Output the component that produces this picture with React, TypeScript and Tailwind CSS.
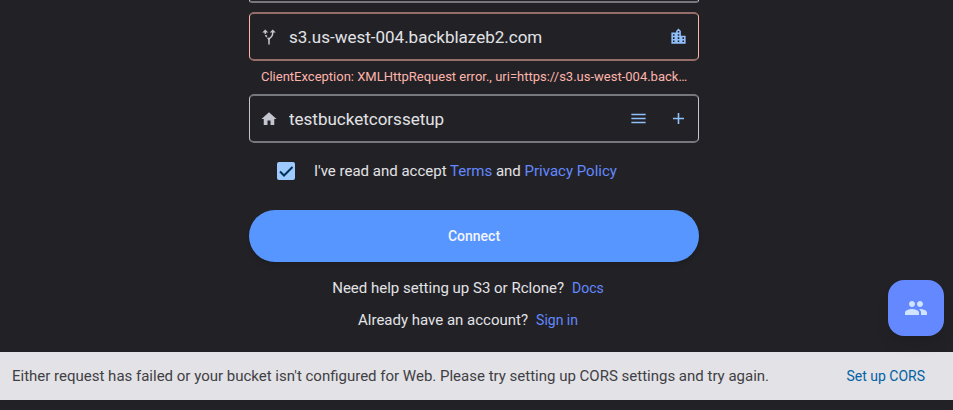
import type { ReactNode } from 'react';
import { useState } from 'react';

type IconProps = { d: string; size: string };

function Icon({ d, size }: IconProps) {
  return (
    <svg viewBox="0 0 24 24" fill="currentColor" className={size} aria-hidden="true">
      <path d={d} />
    </svg>
  );
}

const icons = {
  fork: 'M9.78 11.16l-1.42 1.42c-.68-.69-1.34-1.58-1.79-2.94l1.94-.49c.32.89.77 1.5 1.27 2.01zM11 6L7 2 3 6h3.02c.02.81.08 1.54.19 2.17l1.94-.49C8.08 7.2 8.03 6.63 8.02 6H11zm10 0l-4-4-4 4h2.99c-.1 3.68-1.28 4.75-2.54 5.88-.5.44-1.01.92-1.45 1.55-.34-.49-.73-.88-1.13-1.24L9.46 13.6c.93.85 1.54 1.54 1.54 3.4v5h2v-5c0-2.02.71-2.66 1.79-3.63 1.38-1.24 3.08-2.78 3.2-7.37H21z',
  home: 'M10 20v-6h4v6h5v-8h3L12 3 2 12h3v8z',
  city: 'M15 11V5l-3-3-3 3v2H3v14h18V11h-6zm-8 8H5v-2h2v2zm0-4H5v-2h2v2zm0-4H5V9h2v2zm6 8h-2v-2h2v2zm0-4h-2v-2h2v2zm0-4h-2V9h2v2zm0-4h-2V5h2v2zm6 12h-2v-2h2v2zm0-4h-2v-2h2v2z',
  list: 'M3 18h18v-2H3v2zm0-5h18v-2H3v2zm0-7v2h18V6H3z',
  plus: 'M19 13h-6v6h-2v-6H5v-2h6V5h2v6h6v2z',
  people:
    'M16 11c1.66 0 2.99-1.34 2.99-3S17.66 5 16 5s-3 1.34-3 3 1.34 3 3 3zm-8 0c1.66 0 2.99-1.34 2.99-3S9.66 5 8 5 5 6.34 5 8s1.34 3 3 3zm0 2c-2.33 0-7 1.17-7 3.5V19h14v-2.5c0-2.33-4.67-3.5-7-3.5zm8 0c-.29 0-.62.02-.97.05 1.16.84 1.97 1.97 1.97 3.45V19h6v-2.5c0-2.33-4.67-3.5-7-3.5z',
};

function Field({
  label,
  icon,
  value,
  error,
  children,
}: {
  label: string;
  icon: string;
  value: string;
  error?: boolean;
  children: ReactNode;
}) {
  return (
    <div
      className={`flex h-[49px] items-center rounded-[5px] border-x border-y-2 pl-[10px] ${
        error ? 'border-x-[#ffb4ab] border-y-[#956d6a]' : 'border-x-[#c3c6cf] border-y-[#77787d]'
      }`}
    >
      <span className="text-[#c3c6cf]">
        <Icon d={icon} size="size-[18px]" />
      </span>
      <input
        aria-label={label}
        aria-invalid={error}
        defaultValue={value}
        className="ml-[11px] min-w-0 flex-1 bg-transparent text-[17px] leading-6 text-[#e3e2e6] outline-none"
      />
      {children}
    </div>
  );
}

function FieldButton({ label, icon }: { label: string; icon: string }) {
  return (
    <button type="button" aria-label={label} className="flex size-10 items-center justify-center text-[#90c0fb]">
      <Icon d={icon} size="size-[19px]" />
    </button>
  );
}

export default function App() {
  const [accepted, setAccepted] = useState(true);
  return (
    <div className="min-h-screen bg-[#222226] font-[Roboto,sans-serif] text-[15px] leading-5 text-[#e3e2e6]">
      <main className="flex justify-center pr-[5px]">
        <form className="flex w-full max-w-[450px] flex-col" onSubmit={(e) => e.preventDefault()}>
          <div className="h-[3px] rounded-b-[5px] border-x border-b-2 border-x-[#c3c6cf] border-b-[#77787d]" />
          <div className="mt-[9px]">
            <Field label="Endpoint" icon={icons.fork} value="s3.us-west-004.backblazeb2.com" error>
              <FieldButton label="Choose provider" icon={icons.city} />
            </Field>
          </div>
          <p className="pt-2 pr-2 pb-[9px] pl-3 text-[13px] leading-4 text-[#ffb4ab]">
            ClientException: XMLHttpRequest error., uri=https://s3.us-west-004.back…
          </p>
          <Field label="Bucket" icon={icons.home} value="testbucketcorssetup">
            <FieldButton label="List buckets" icon={icons.list} />
            <FieldButton label="Create bucket" icon={icons.plus} />
          </Field>
          <div className="mt-[18px] flex items-center pl-7">
            <span className="relative flex size-[18px]">
              <input
                id="accept"
                type="checkbox"
                checked={accepted}
                onChange={(e) => setAccepted(e.target.checked)}
                className="size-[18px] appearance-none rounded-xs border-2 border-[#9ecaff] checked:bg-[#9ecaff]"
              />
              {accepted && (
                <svg
                  viewBox="0 0 18 18"
                  className="pointer-events-none absolute inset-0 size-[18px] fill-none stroke-[#003258] stroke-2"
                  aria-hidden="true"
                >
                  <path d="M3 9.5L7 13.5L15.5 5" />
                </svg>
              )}
            </span>
            <label htmlFor="accept" className="ml-[19px]">
              I've read and accept{' '}
              <a href="#terms" className="text-[#6388ff]">
                Terms
              </a>{' '}
              and{' '}
              <a href="#privacy" className="text-[#6388ff]">
                Privacy Policy
              </a>
            </label>
          </div>
          <button
            type="submit"
            className="mt-[29px] h-[52px] rounded-full bg-[#5896ff] text-sm font-medium text-[#f3f5ff] shadow-md"
          >
            Connect
          </button>
          <p className="mt-4 pr-3 text-center">
            Need help setting up S3 or Rclone?
            <a href="#docs" className="ml-2 text-sm text-[#6388ff]">
              Docs
            </a>
          </p>
          <p className="mt-3 pr-3 text-center">
            Already have an account?
            <a href="#signin" className="ml-2 text-sm text-[#6388ff]">
              Sign in
            </a>
          </p>
        </form>
      </main>
      <div
        role="status"
        className="mt-[22px] flex min-h-12 items-center justify-between bg-[#e3e2e6] pr-7 pl-3 text-[#3f4044]"
      >
        <span>
          Either request has failed or your bucket isn't configured for Web. Please try setting up CORS settings and try
          again.
        </span>
        <button type="button" className="text-sm text-[#0061a4]">
          Set up CORS
        </button>
      </div>
      <button
        type="button"
        aria-label="Community"
        className="fixed right-[9px] bottom-[74px] flex size-14 items-center justify-center rounded-2xl bg-[#6388ff] text-[#d1e4ff] shadow-lg"
      >
        <Icon d={icons.people} size="size-6" />
      </button>
    </div>
  );
}
